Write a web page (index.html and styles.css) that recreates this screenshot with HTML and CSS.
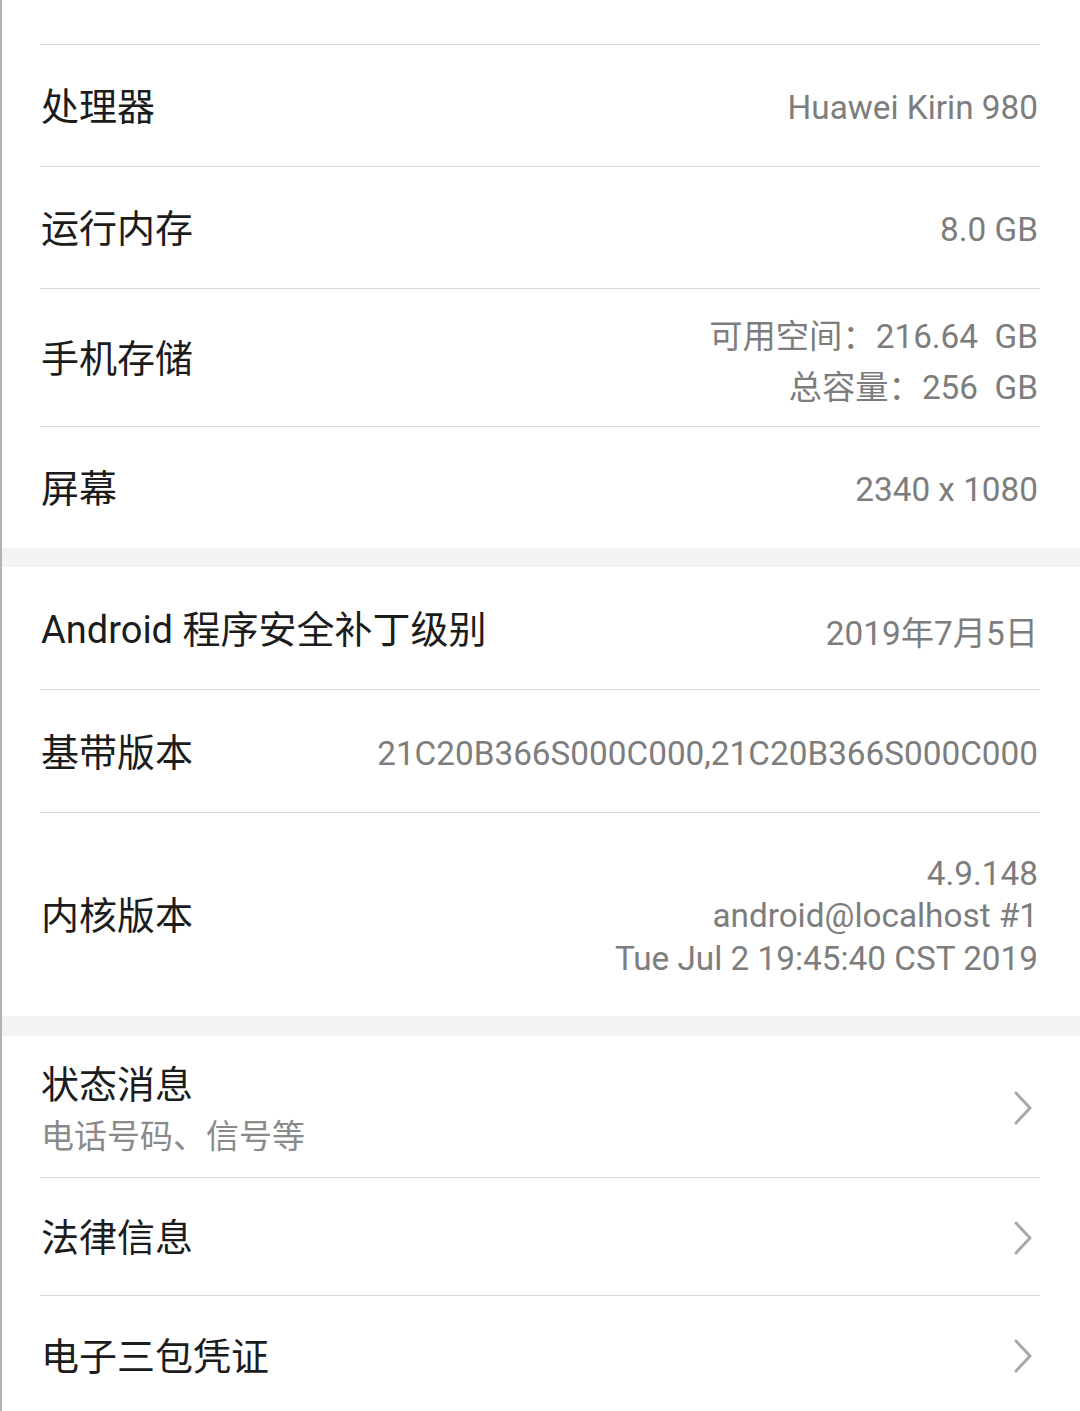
FILE: index.html
```html
<!DOCTYPE html>
<html lang="zh-CN">
<head>
<meta charset="utf-8">
<link rel="stylesheet" href="styles.css">
</head>
<body>
<div class="page">
  <section class="group">
    <div class="row spacer"></div>
    <div class="row h122"><div class="label">处理器</div><div class="value">Huawei Kirin 980</div></div>
    <div class="row h122"><div class="label">运行内存</div><div class="value">8.0 GB</div></div>
    <div class="row h138"><div class="label">手机存储</div><div class="value multi cjk"><div>可用空间<span class="colon">：</span>216.64&nbsp; GB</div><div>总容量<span class="colon">：</span>256&nbsp; GB</div></div></div>
    <div class="row h121 last"><div class="label">屏幕</div><div class="value">2340 x 1080</div></div>
  </section>
  <div class="gap"></div>
  <section class="group">
    <div class="row h123"><div class="label">Android 程序安全补丁级别</div><div class="value">2019年7月5日</div></div>
    <div class="row h123"><div class="label">基带版本</div><div class="value">21C20B366S000C000,21C20B366S000C000</div></div>
    <div class="row h203 last"><div class="label">内核版本</div><div class="value multi latin"><div>4.9.148</div><div>android@localhost #1</div><div>Tue Jul 2 19:45:40 CST 2019</div></div></div>
  </section>
  <div class="gap g2"></div>
  <section class="group">
    <div class="row h142 link"><div class="texts"><div class="label">状态消息</div><div class="sub">电话号码、信号等</div></div><svg class="chev" viewBox="0 0 20 34" width="20" height="34"><path d="M3 2 L17 17 L3 32" fill="none" stroke="#a9a9a9" stroke-width="3" stroke-linecap="round" stroke-linejoin="round"/></svg></div>
    <div class="row h118 link"><div class="label">法律信息</div><svg class="chev" viewBox="0 0 20 34" width="20" height="34"><path d="M3 2 L17 17 L3 32" fill="none" stroke="#a9a9a9" stroke-width="3" stroke-linecap="round" stroke-linejoin="round"/></svg></div>
    <div class="row h118 link last"><div class="label">电子三包凭证</div><svg class="chev" viewBox="0 0 20 34" width="20" height="34"><path d="M3 2 L17 17 L3 32" fill="none" stroke="#a9a9a9" stroke-width="3" stroke-linecap="round" stroke-linejoin="round"/></svg></div>
  </section>
</div>
</body>
</html>
```
FILE: styles.css
```css
html, body {
  margin: 0;
  padding: 0;
  background: #ffffff;
}
.page {
  width: 1078px;
  min-height: 1411px;
  border-left: 2px solid #b3b3b3;
  font-family: Roboto, "Noto Sans CJK SC", sans-serif;
  overflow: hidden;
}
.group {
  background: #ffffff;
}
.gap {
  height: 19px;
  background: #f3f3f3;
}
.gap.g2 {
  height: 20px;
}
.row {
  margin: 0 40px 0 38px;
  padding: 0 2px 0 1px;
  display: flex;
  align-items: center;
  justify-content: space-between;
  border-bottom: 1px solid #dadada;
  box-sizing: border-box;
}
.row.last {
  border-bottom: none;
}
.spacer { height: 45px; }
.h121 { height: 121px; }
.h122 { height: 122px; }
.h123 { height: 123px; }
.h138 { height: 138px; }
.h203 { height: 203px; }
.h142 { height: 142px; }
.h118 { height: 118px; }
.label {
  font-family: Roboto, "Noto Sans CJK SC", sans-serif;
  font-size: 38px;
  color: #1c1c1c;
  line-height: 1.2;
  white-space: nowrap;
  margin-top: 5px;
}
.value {
  font-family: Roboto, "Noto Sans CJK SC", sans-serif;
  font-size: 33.3px;
  color: #7d7d7d;
  text-align: right;
  white-space: nowrap;
  margin-top: 4px;
}
.value.cjk {
  line-height: 48px;
  margin-top: 6px;
}
.value.latin { line-height: 42.5px; }
.colon {
  font-family: "Noto Sans CJK TC", sans-serif;
}
.texts {
  display: flex;
  flex-direction: column;
  margin-top: 7px;
}
.texts .label {
  line-height: 49px;
  margin-top: 0;
}
.sub {
  font-family: "Noto Sans CJK SC", sans-serif;
  font-size: 33px;
  color: #8a8a8a;
  line-height: 49px;
}
.chev {
  margin-right: 5px;
  margin-top: 2px;
  flex: none;
}
```
